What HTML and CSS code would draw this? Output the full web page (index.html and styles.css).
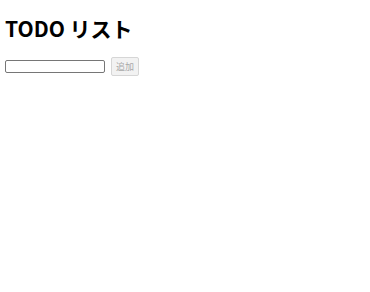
FILE: index.html
```html
<!DOCTYPE html>
<html lang="ja">
<head>
    <meta charset="UTF-8">
    <meta name="viewport" content="width=device-width, initial-scale=1.0">
    <title>TODO リスト</title>
    <link rel="stylesheet" href="styles.css">
</head>
<body>
<h1>TODO リスト</h1>

<!-- Form to add a todo -->
<form id="todo-form" class="todo-form">
    <input type="text" id="todo-input" class="todo-input">
    <button type="submit" class="add-btn" disabled>追加</button>
</form>

<ul id="todo-list" class="todo-list">
</ul>
</body>
</html>
```

FILE: styles.css
```css
body {
    font-family: "Noto Sans CJK JP", "DejaVu Sans", sans-serif;
    margin: 5px;
    background-color: #fff;
    color: #000;
}

h1 {
    font-size: 21px;
    font-weight: bold;
    margin: 11px 0 16px 0;
    line-height: 1.2;
}

.todo-form {
    display: flex;
    align-items: center;
    gap: 6px;
}

.todo-input {
    width: 96px;
    height: 9px;
    padding: 1px;
    margin: 0;
    border: 1px solid #767676;
    border-radius: 2px;
    font-size: 9px;
}

.add-btn {
    font-family: "Noto Sans CJK JP", sans-serif;
    font-size: 9px;
    color: #a8a8a8;
    background-color: #f2f2f2;
    border: 1px solid #d6d6d6;
    border-radius: 2px;
    padding: 1px 4px;
    height: 19px;
    line-height: 15px;
}

.todo-list {
    list-style: none;
    padding: 0;
    margin: 10px 0;
}
```
